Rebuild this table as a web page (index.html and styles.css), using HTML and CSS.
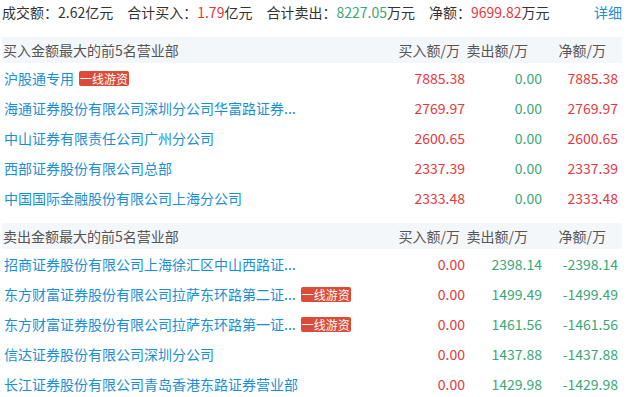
FILE: index.html
```html
<!DOCTYPE html>
<html>
<head>
<meta charset="utf-8">
<link rel="stylesheet" href="styles.css">
</head>
<body>
<div class="wrap">
  <div class="summary">
    <span class="item">成交额：2.62亿元</span>
    <span class="item">合计买入：<span class="red">1.79</span>亿元</span>
    <span class="item">合计卖出：<span class="green">8227.05</span>万元</span>
    <span class="item">净额：<span class="red">9699.82</span>万元</span>
    <a class="detail">详细</a>
  </div>

  <div class="section">
    <div class="row head">
      <div class="name">买入金额最大的前5名营业部</div>
      <div class="num h-buy">买入额/万</div>
      <div class="num h-sell">卖出额/万</div>
      <div class="num h-net">净额/万</div>
    </div>
    <div class="row">
      <div class="name"><span class="link">沪股通专用</span><span class="tag">一线游资</span></div>
      <div class="num red">7885.38</div><div class="num green">0.00</div><div class="num red">7885.38</div>
    </div>
    <div class="row">
      <div class="name"><span class="link">海通证券股份有限公司深圳分公司华富路证券...</span></div>
      <div class="num red">2769.97</div><div class="num green">0.00</div><div class="num red">2769.97</div>
    </div>
    <div class="row">
      <div class="name"><span class="link">中山证券有限责任公司广州分公司</span></div>
      <div class="num red">2600.65</div><div class="num green">0.00</div><div class="num red">2600.65</div>
    </div>
    <div class="row">
      <div class="name"><span class="link">西部证券股份有限公司总部</span></div>
      <div class="num red">2337.39</div><div class="num green">0.00</div><div class="num red">2337.39</div>
    </div>
    <div class="row">
      <div class="name"><span class="link">中国国际金融股份有限公司上海分公司</span></div>
      <div class="num red">2333.48</div><div class="num green">0.00</div><div class="num red">2333.48</div>
    </div>
  </div>

  <div class="section second">
    <div class="row head">
      <div class="name">卖出金额最大的前5名营业部</div>
      <div class="num h-buy">买入额/万</div>
      <div class="num h-sell">卖出额/万</div>
      <div class="num h-net">净额/万</div>
    </div>
    <div class="row">
      <div class="name"><span class="link">招商证券股份有限公司上海徐汇区中山西路证...</span></div>
      <div class="num red">0.00</div><div class="num green">2398.14</div><div class="num green">-2398.14</div>
    </div>
    <div class="row">
      <div class="name"><span class="link">东方财富证券股份有限公司拉萨东环路第二证...</span><span class="tag">一线游资</span></div>
      <div class="num red">0.00</div><div class="num green">1499.49</div><div class="num green">-1499.49</div>
    </div>
    <div class="row">
      <div class="name"><span class="link">东方财富证券股份有限公司拉萨东环路第一证...</span><span class="tag">一线游资</span></div>
      <div class="num red">0.00</div><div class="num green">1461.56</div><div class="num green">-1461.56</div>
    </div>
    <div class="row">
      <div class="name"><span class="link">信达证券股份有限公司深圳分公司</span></div>
      <div class="num red">0.00</div><div class="num green">1437.88</div><div class="num green">-1437.88</div>
    </div>
    <div class="row">
      <div class="name"><span class="link">长江证券股份有限公司青岛香港东路证券营业部</span></div>
      <div class="num red">0.00</div><div class="num green">1429.98</div><div class="num green">-1429.98</div>
    </div>
  </div>
</div>
</body>
</html>
```

FILE: styles.css
```css
html, body {
  margin: 0;
  padding: 0;
  background: #fff;
}
body {
  font-family: "Noto Sans CJK SC", "Microsoft YaHei", sans-serif;
  font-size: 14px;
  color: #333;
}
.wrap {
  width: 620px;
  margin-left: 2px;
}
.summary {
  display: flex;
  align-items: center;
  height: 25px;
  line-height: 25px;
  white-space: nowrap;
  margin-bottom: 12px;
}
.summary .item {
  margin-right: 14px;
}
.detail {
  margin-left: auto;
  color: #1a8fd6;
}
.red { color: #e8383d; }
.green { color: #3aa876; }
.section.second {
  margin-top: 10px;
}
.row {
  display: grid;
  grid-template-columns: 1fr 70px 77px 76px;
  height: 30px;
  line-height: 30px;
  padding-right: 4px;
  white-space: nowrap;
}
.row.head {
  height: 26px;
  line-height: 26px;
  background: #f4f7fa;
  color: #555;
}
.name {
  padding-left: 2px;
  display: flex;
  align-items: center;
  overflow: hidden;
}
.row.head .name {
  padding-left: 1px;
}
.link {
  color: #1a8fd6;
}
.tag {
  display: inline-block;
  margin-left: 5px;
  background: #dc4a38;
  color: #fff;
  font-size: 12px;
  line-height: 15px;
  height: 15px;
  padding: 0 1px;
  border-radius: 2px;
}
.num {
  text-align: right;
}
.h-buy { padding-right: 5px; }
.h-sell { padding-right: 14px; }
.h-net { padding-right: 12px; }
```
